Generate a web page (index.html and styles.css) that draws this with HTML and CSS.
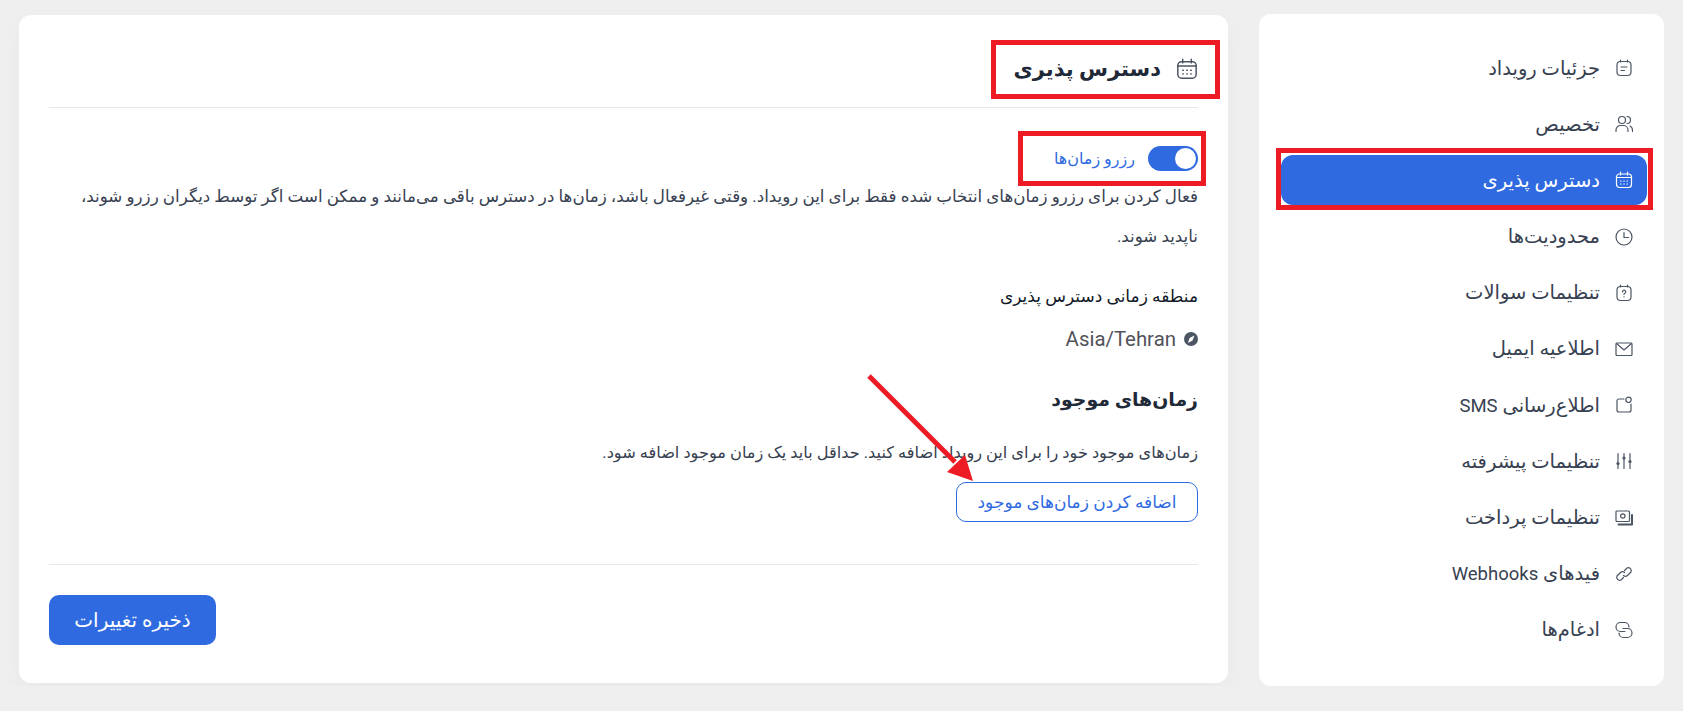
FILE: index.html
```html
<!DOCTYPE html>
<html lang="fa" dir="rtl">

<head>
    <meta charset="UTF-8">
    <meta name="viewport" content="width=device-width, initial-scale=1.0">
    <title>دسترس پذیری</title>
    <link rel="stylesheet" href="styles.css">
</head>

<body>
    <div class="page">
        <nav class="sidebar">
            <a class="nav-item">
                <svg class="icon" viewBox="0 0 18 18"><rect x="2" y="2.500" width="14" height="14" rx="3.500"/><path d="M5.500 1v2M12.500 1v2M6 8h6M6 11.500h3.500"/></svg>
                <span>جزئیات رویداد</span>
            </a>
            <a class="nav-item">
                <svg class="icon" viewBox="0 0 18 18"><circle cx="7" cy="5" r="3.500"/><path d="M1 16.500v-1.500a4.500 4.500 0 0 1 4.500-4.500h3a4.500 4.500 0 0 1 4.500 4.500v1.500M12 1.500a3.500 3.500 0 0 1 0 7M17.500 16.500v-1.500a4.500 4.500 0 0 0-2.500-4"/></svg>
                <span>تخصیص</span>
            </a>
            <a class="nav-item active">
                <svg class="icon" viewBox="0 0 18 18"><rect x="1.500" y="3" width="15" height="13.500" rx="3"/><path d="M5.500 1v3M12.500 1v3M1.500 6.500h15M5.500 10h.5M8.800 10h.5M12 10h.5M5.500 13h.5M8.800 13h.5M12 13h.5"/></svg>
                <span>دسترس پذیری</span>
            </a>
            <a class="nav-item">
                <svg class="icon" viewBox="0 0 18 18"><circle cx="9" cy="9" r="8"/><path d="M9 4.500V9.500h4.500"/></svg>
                <span>محدودیت‌ها</span>
            </a>
            <a class="nav-item">
                <svg class="icon" viewBox="0 0 18 18"><rect x="2" y="2.500" width="14" height="14" rx="3.500"/><path d="M5.500 1v2M12.500 1v2M7.500 7.800a1.600 1.600 0 1 1 2.400 1.400c-.6.300-.9.600-.9 1.100M9 12.800v.2"/></svg>
                <span>تنظیمات سوالات</span>
            </a>
            <a class="nav-item">
                <svg class="icon" viewBox="0 0 18 18"><rect x="1" y="3" width="16" height="12.500" rx="1"/><path d="M1.500 3.500L9 10l7.500-6.500"/></svg>
                <span>اطلاعیه ایمیل</span>
            </a>
            <a class="nav-item">
                <svg class="icon" viewBox="0 0 18 18"><path d="M9 3H4a2 2 0 0 0-2 2V14a2 2 0 0 0 2 2h10a2 2 0 0 0 2-2V8"/><circle cx="13.500" cy="3.800" r="2.700"/></svg>
                <span>اطلاع‌رسانی <span class="latin">SMS</span></span>
            </a>
            <a class="nav-item">
                <svg class="icon" viewBox="0 0 18 18"><path d="M3 1.500v15M9 1.500v15M15 1.500v15"/><circle class="dot" cx="3" cy="11.500" r="1.600"/><circle class="dot" cx="9" cy="6" r="1.600"/><circle class="dot" cx="15" cy="9.500" r="1.600"/></svg>
                <span>تنظیمات پیشرفته</span>
            </a>
            <a class="nav-item">
                <svg class="icon" viewBox="0 0 18 18"><rect x="1" y="2" width="13.500" height="10.500" rx="1"/><circle cx="7.800" cy="7" r="2.200"/><path class="thick" d="M17 6v9.500H3.500"/></svg>
                <span>تنظیمات پرداخت</span>
            </a>
            <a class="nav-item">
                <svg class="icon" viewBox="0 0 18 18"><path d="M9.500 5.500L12 3a3 3 0 0 1 4 4l-3.500 3.500a3 3 0 0 1-4 0"/><path d="M8.500 12.500L6 15a3 3 0 0 1-4-4l3.500-3.500a3 3 0 0 1 4 0"/></svg>
                <span>فیدهای <span class="latin">Webhooks</span></span>
            </a>
            <a class="nav-item">
                <svg class="icon" viewBox="0 0 18 18"><path d="M10 10.500H5.500a4.500 4.500 0 0 1 0-9h4a4.500 4.500 0 0 1 4.500 4.500"/><path d="M8 7.500h4.500a4.500 4.500 0 0 1 0 9h-4a4.500 4.500 0 0 1-4.500-4.500"/></svg>
                <span>ادغام‌ها</span>
            </a>
        </nav>

        <main class="content">
            <div class="content-head">
                <div class="title marked">
                    <svg class="icon icon-lg" viewBox="0 0 18 18"><rect x="1.500" y="3" width="15" height="13.500" rx="3"/><path d="M5.500 1v3M12.500 1v3M1.500 6.500h15M5.500 10h.5M8.800 10h.5M12 10h.5M5.500 13h.5M8.800 13h.5M12 13h.5"/></svg>
                    <h1>دسترس پذیری</h1>
                </div>
            </div>

            <div class="switch-row marked">
                <span class="switch"><span class="knob"></span></span>
                <span class="switch-label">رزرو زمان‌ها</span>
            </div>
            <p class="hint">فعال کردن برای رزرو زمان‌های انتخاب شده فقط برای این رویداد. وقتی غیرفعال باشد، زمان‌ها در دسترس باقی می‌مانند و ممکن است اگر توسط دیگران رزرو شوند، ناپدید شوند.</p>

            <h3 class="field-label">منطقه زمانی دسترس پذیری</h3>
            <div class="zone">
                <svg class="zone-icon" viewBox="0 0 14 14"><circle cx="7" cy="7" r="7"/><path class="cut" d="M10.500 3.500L8.500 8.500 4 11l1.500-5z"/></svg>
                <span dir="ltr">Asia/Tehran</span>
            </div>

            <h2 class="section-title">زمان‌های موجود</h2>
            <p class="desc">زمان‌های موجود خود را برای این رویداد اضافه کنید. حداقل باید یک زمان موجود اضافه شود.</p>
            <button class="btn-outline">اضافه کردن زمان‌های موجود</button>

            <div class="content-foot">
                <button class="btn-save">ذخیره تغییرات</button>
            </div>

            <svg class="arrow" viewBox="0 0 120 120"><path d="M2 2L88 88" /><polygon points="106,107 80,98 98,81"/></svg>
        </main>
    </div>
</body>

</html>
```

FILE: styles.css
```css
* {
    box-sizing: border-box;
}

body {
    margin: 0;
    background-color: #efefef;
    font-family: Roboto, "DejaVu Sans", sans-serif;
    color: #374151;
}

h1, h2, h3, p {
    margin: 0;
}

.page {
    display: flex;
    align-items: flex-start;
    gap: 31px;
    padding: 14px 19px 0;
}

.sidebar {
    width: 405px;
    height: 672px;
    flex-shrink: 0;
    display: flex;
    flex-direction: column;
    gap: 6.2px;
    padding: 29px 17px 0 22px;
    background-color: #fff;
    border-radius: 12px;
}

.nav-item {
    position: relative;
    display: flex;
    align-items: center;
    gap: 15px;
    height: 50px;
    padding: 0 14px;
    border-radius: 12px;
    font-size: 19.500px;
    color: #374151;
}

.latin {
    font-size: 18.500px;
}

.nav-item.active {
    background-color: #2f6ae0;
    color: #fff;
}

.nav-item.active::after {
    content: "";
    position: absolute;
    top: -7px;
    right: -6px;
    bottom: -5px;
    left: -5px;
    border: 5px solid #ed1c24;
}

.icon {
    width: 18px;
    height: 18px;
    flex-shrink: 0;
    fill: none;
    stroke: #4b5563;
    stroke-width: 1.200;
    stroke-linecap: round;
    stroke-linejoin: round;
}

.active .icon {
    stroke: #fff;
}

.icon .thick {
    stroke-width: 2;
}

.icon .dot {
    fill: #4b5563;
    stroke: none;
}

.icon-lg {
    width: 22px;
    height: 22px;
}

.content {
    position: relative;
    flex: 1;
    margin-top: 1px;
    padding: 0 30px 38px;
    background-color: #fff;
    border-radius: 12px;
    box-shadow: 0 8px 24px rgba(0, 0, 0, 0.03);
    font-size: 14px;
}

.content-head {
    padding: 34px 0 18px;
    border-bottom: 1px solid #e8e8e8;
}

.title {
    display: flex;
    align-items: center;
    gap: 15px;
    height: 40px;
}

.title h1 {
    font-size: 21px;
    font-weight: 700;
    color: #1f2937;
}

.marked {
    position: relative;
}

.marked::after {
    content: "";
    position: absolute;
    border: 5px solid #ed1c24;
}

.title::after {
    top: -9px;
    right: -22px;
    width: 219px;
    height: 49px;
}

.switch-row {
    display: flex;
    align-items: center;
    gap: 13px;
    height: 25px;
    margin-top: 38px;
}

.switch-row::after {
    top: -15px;
    right: -8px;
    width: 178px;
    height: 45px;
}

.switch {
    display: flex;
    align-items: center;
    justify-content: flex-start;
    width: 50px;
    height: 25px;
    padding: 0 2px;
    background-color: #2f6ae0;
    border-radius: 13px;
}

.knob {
    width: 21px;
    height: 21px;
    background-color: #fff;
    border-radius: 50%;
}

.switch-label {
    font-size: 16px;
    color: #2f6ae0;
}

.hint {
    margin-top: 6px;
    font-size: 16.700px;
    line-height: 40px;
}

.field-label {
    margin-top: 27px;
    font-size: 17px;
    font-weight: 500;
    line-height: 24px;
    color: #111827;
}

.zone {
    display: flex;
    align-items: center;
    gap: 8px;
    height: 24px;
    margin-top: 19px;
    font-size: 20.400px;
    color: #52525b;
}

.zone-icon {
    width: 14px;
    height: 14px;
    fill: #4b5563;
}

.zone-icon .cut {
    fill: #fff;
}

.section-title {
    margin-top: 34px;
    font-size: 18.900px;
    font-weight: 700;
    line-height: 30px;
    color: #1f2937;
}

.desc {
    margin-top: 26px;
    font-size: 16.200px;
    line-height: 24px;
}

.btn-outline {
    display: block;
    width: 242px;
    height: 40px;
    margin-top: 17px;
    background-color: #fff;
    border: 1px solid #2f6ae0;
    border-radius: 10px;
    font-family: inherit;
    font-size: 17px;
    color: #2f6ae0;
}

.content-foot {
    margin-top: 42px;
    padding-top: 30px;
    border-top: 1px solid #e8e8e8;
}

.btn-save {
    display: block;
    width: 167px;
    height: 50px;
    margin-right: auto;
    background-color: #2f6ae0;
    border: 0;
    border-radius: 10px;
    font-family: inherit;
    font-size: 20px;
    font-weight: 500;
    color: #fff;
}

.arrow {
    position: absolute;
    top: 359px;
    left: 848px;
    width: 120px;
    height: 120px;
}

.arrow path {
    fill: none;
    stroke: #ed1c24;
    stroke-width: 5;
}

.arrow polygon {
    fill: #ed1c24;
}
```
